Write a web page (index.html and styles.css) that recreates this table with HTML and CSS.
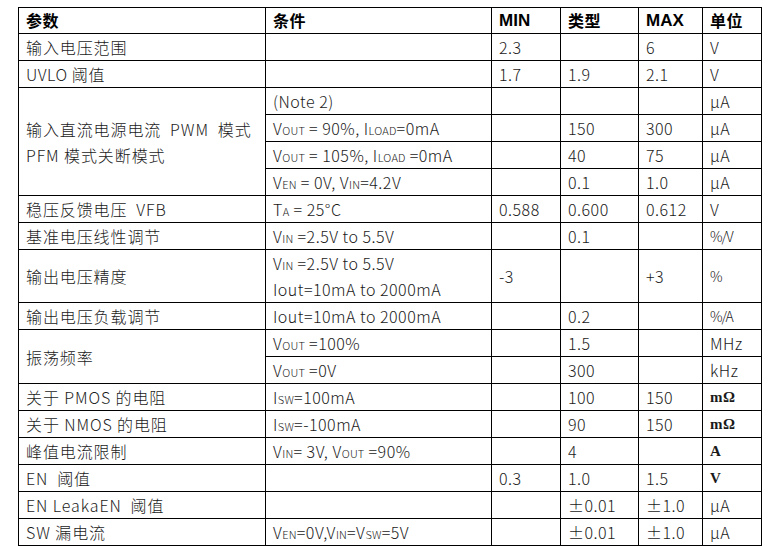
FILE: index.html
```html
<!DOCTYPE html>
<html lang="zh">
<head>
<meta charset="utf-8">
<title>电气特性</title>
<link rel="stylesheet" href="styles.css">
</head>
<body>
<table class="spec">
  <colgroup>
    <col class="c-param">
    <col class="c-cond">
    <col class="c-min">
    <col class="c-typ">
    <col class="c-max">
    <col class="c-unit">
  </colgroup>
  <thead>
    <tr>
      <th>参数</th>
      <th>条件</th>
      <th class="latin">MIN</th>
      <th>类型</th>
      <th class="latin">MAX</th>
      <th>单位</th>
    </tr>
  </thead>
  <tbody>
    <tr><td class="cjk">输入电压范围</td><td></td><td>2.3</td><td></td><td>6</td><td>V</td></tr>
    <tr><td>UVLO <span class="cjk">阈值</span></td><td></td><td>1.7</td><td>1.9</td><td>2.1</td><td>V</td></tr>
    <tr>
      <td rowspan="4" class="cjk">输入直流电源电流&nbsp; PWM&nbsp; 模式<br>PFM 模式关断模式</td>
      <td>(Note 2)</td><td></td><td></td><td></td><td>μA</td>
    </tr>
    <tr><td>V<span class="sc">OUT</span> = 90%, I<span class="sc">LOAD</span>=0mA</td><td></td><td>150</td><td>300</td><td>μA</td></tr>
    <tr><td>V<span class="sc">OUT</span> = 105%, I<span class="sc">LOAD</span> =0mA</td><td></td><td>40</td><td>75</td><td>μA</td></tr>
    <tr><td>V<span class="sc">EN</span> = 0V, V<span class="sc">IN</span>=4.2V</td><td></td><td>0.1</td><td>1.0</td><td>μA</td></tr>
    <tr><td class="cjk">稳压反馈电压&nbsp; VFB</td><td>T<span class="sc">A</span> = 25°C</td><td>0.588</td><td>0.600</td><td>0.612</td><td>V</td></tr>
    <tr><td class="cjk">基准电压线性调节</td><td>V<span class="sc">IN</span> =2.5V to 5.5V</td><td></td><td>0.1</td><td></td><td class="pct">%/V</td></tr>
    <tr class="tall">
      <td class="cjk">输出电压精度</td>
      <td>V<span class="sc">IN</span> =2.5V to 5.5V<br>Iout=10mA to 2000mA</td>
      <td>-3</td><td></td><td>+3</td><td class="pct">%</td>
    </tr>
    <tr><td class="cjk">输出电压负载调节</td><td>Iout=10mA to 2000mA</td><td></td><td>0.2</td><td></td><td class="pct">%/A</td></tr>
    <tr>
      <td rowspan="2" class="cjk">振荡频率</td>
      <td>V<span class="sc">OUT</span> =100%</td><td></td><td>1.5</td><td></td><td>MHz</td>
    </tr>
    <tr><td>V<span class="sc">OUT</span> =0V</td><td></td><td>300</td><td></td><td>kHz</td></tr>
    <tr><td class="cjk">关于 PMOS 的电阻</td><td>I<span class="sc">SW</span>=100mA</td><td></td><td>100</td><td>150</td><td class="serif">mΩ</td></tr>
    <tr><td class="cjk">关于 NMOS 的电阻</td><td>I<span class="sc">SW</span>=-100mA</td><td></td><td>90</td><td>150</td><td class="serif">mΩ</td></tr>
    <tr><td class="cjk">峰值电流限制</td><td>V<span class="sc">IN</span>= 3V, V<span class="sc">OUT</span> =90%</td><td></td><td>4</td><td></td><td class="serif">A</td></tr>
    <tr><td class="cjk">EN&nbsp; 阈值</td><td></td><td>0.3</td><td>1.0</td><td>1.5</td><td class="serif">V</td></tr>
    <tr><td class="cjk">EN LeakaEN&nbsp; 阈值</td><td></td><td></td><td>±0.01</td><td>±1.0</td><td>μA</td></tr>
    <tr><td class="cjk">SW 漏电流</td><td>V<span class="sc">EN</span>=0V,V<span class="sc">IN</span>=V<span class="sc">SW</span>=5V</td><td></td><td>±0.01</td><td>±1.0</td><td>μA</td></tr>
  </tbody>
</table>
</body>
</html>
```

FILE: styles.css
```css
html, body {
  margin: 0;
  background: #ffffff;
}

body {
  padding: 7px 0 0 18px;
  font-family: "Noto Sans CJK SC", "Noto Sans", sans-serif;
  font-size: 16px;
  color: #1a1a1a;
}

.spec {
  border-collapse: collapse;
  table-layout: fixed;
  width: 743px;
}

.c-param { width: 247px; }
.c-cond  { width: 226px; }
.c-min   { width: 69px; }
.c-typ   { width: 78px; }
.c-max   { width: 64px; }
.c-unit  { width: 59px; }

.spec th,
.spec td {
  border: 1px solid #000;
  padding: 0 0 0 7px;
  height: 26px;
  line-height: 26px;
  text-align: left;
  vertical-align: middle;
  white-space: nowrap;
  overflow: hidden;
  font-weight: 300;
  letter-spacing: 0.5px;
}

.spec td.cjk,
.spec td .cjk {
  letter-spacing: 0.9px;
}

.spec th {
  font-weight: 700;
  font-size: 16px;
  color: #000;
  height: 25px;
  line-height: 25px;
  letter-spacing: 0.5px;
}

.spec th.latin {
  font-family: "Liberation Sans", "Noto Sans CJK SC", sans-serif;
  font-size: 17px;
  letter-spacing: 0;
}

.spec tr.tall td {
  height: 50px;
}

.sc {
  font-size: 11px;
  line-height: 1;
  letter-spacing: 0.2px;
}

.spec td.serif {
  font-family: "Liberation Serif", "Noto Serif CJK SC", serif;
  font-weight: 700;
  font-size: 15px;
}

.spec td.pct {
  letter-spacing: -1px;
  font-size: 14px;
}
```
